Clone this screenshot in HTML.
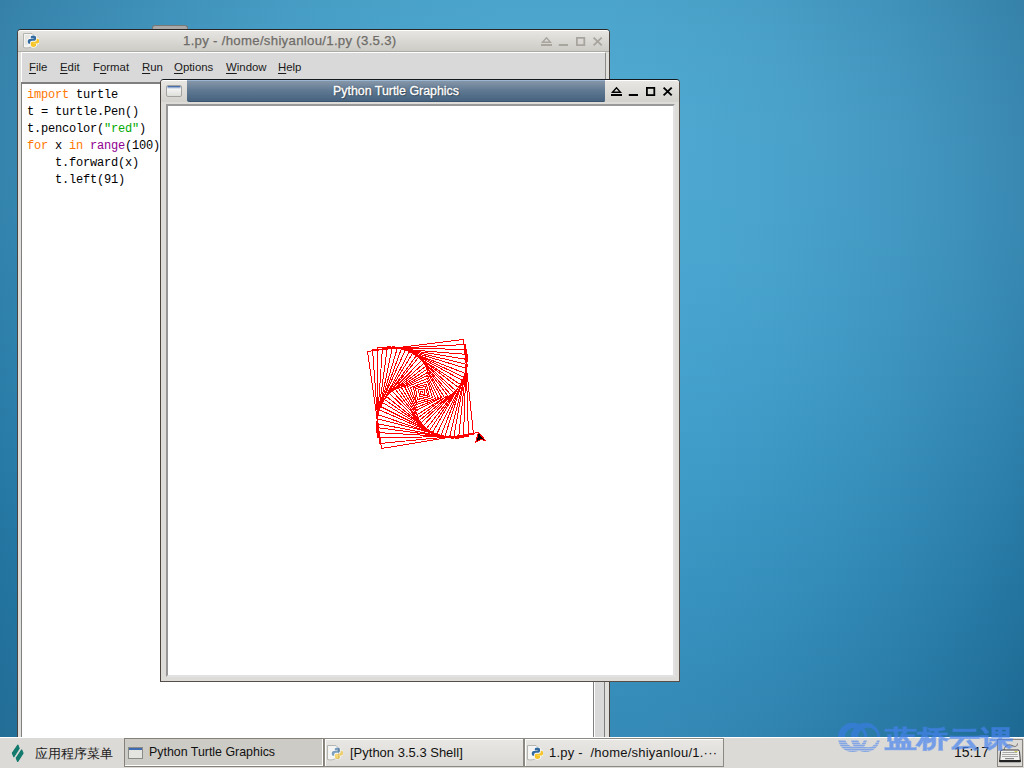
<!DOCTYPE html>
<html><head><meta charset="utf-8">
<style>
*{margin:0;padding:0;box-sizing:border-box}
html,body{width:1024px;height:768px;overflow:hidden;font-family:"Liberation Sans",sans-serif;background:#3583ad}
.a{position:absolute}
#bg div{position:absolute;left:0;width:1024px;height:8px}
/* IDLE window */
#idle{position:absolute;left:17px;top:29px;width:593px;height:710px;background:#e0deda;border:1px solid #4a433e;border-top-color:#2a2624;border-radius:4px 4px 0 0}
#idle .title{position:absolute;left:0;top:0;width:591px;height:22px;border-top:1px solid #fff;border-radius:3px 3px 0 0;background:linear-gradient(#e6e5e1,#cdcbc6);border-bottom:1px solid #adaba6}
#idle .ttext{position:absolute;left:165px;top:2px;text-align:left;white-space:nowrap;font-weight:normal;font-size:13.2px;color:#6e6c68;letter-spacing:0.3px;-webkit-text-stroke:0.25px #6e6c68}
#menubar{position:absolute;left:3px;top:22px;width:585px;height:31px;background:#d9d9d9;border-top:1px solid #fff;border-left:1px solid #fff;border-right:1px solid #8a8a8a}
#menubar span{position:absolute;top:7px;font-size:11.4px;color:#1a1a1a;line-height:14px}
#menubar span u{text-decoration:underline;text-underline-offset:1.5px;text-decoration-thickness:1px}
#text{position:absolute;left:3px;top:52px;width:573px;height:660px;background:#fff;border-top:2px solid #7f7f7f;border-left:1px solid #7f7f7f}
#code{position:absolute;left:5px;top:3px;font-family:"Liberation Mono",monospace;font-size:12px;letter-spacing:-0.2px;line-height:17px;color:#000;white-space:pre}
.kw{color:#ff7700}.st{color:#00aa00}.bi{color:#900090}
#sbar{position:absolute;left:575px;top:52px;width:12px;height:660px;background:#d9d9d9;border-left:1px solid #808080;border-right:1px solid #808080}
#sbar:before{content:"";position:absolute;left:0;top:0;width:1px;height:100%;background:#fff}
#tab{position:absolute;left:152px;top:25px;width:36px;height:5px;background:#a9a9a9;border:1px solid #777;border-bottom:none;border-radius:3px 3px 0 0}
/* turtle window */
#tw{position:absolute;left:160px;top:79px;width:520px;height:603px;background:#dedcd8;border:1px solid #15181c;border-bottom-color:#574e47;border-right-color:#574e47;border-left-color:#4a433e;border-radius:4px 4px 0 0}
#tw .tleft{position:absolute;left:0;top:0;width:26px;height:22px;border-top:1px solid #fff;border-radius:3px 0 0 0;background:linear-gradient(#e7e6e2,#d4d2cd)}
#tw .tright{position:absolute;left:444px;top:0;width:74px;height:22px;border-top:1px solid #fff;border-radius:0 3px 0 0;background:linear-gradient(#e7e6e2,#d4d2cd)}
#tw .tblue{position:absolute;left:26px;top:0;width:418px;height:22px;background:linear-gradient(#8696a8 0px,#5e7892 10px,#44607c 21px);border-top:1px solid #9ab6d2;border-bottom:1px solid #3a546e;border-radius:0 0 1.5px 2px}
#tw .ttext{position:absolute;left:0;width:418px;top:3px;text-align:center;font-weight:normal;font-size:12.4px;letter-spacing:0px;color:#fff;-webkit-text-stroke:0.35px #fff;text-shadow:0 0 1.5px #1c2a3a,1px 1px 1px rgba(0,0,0,.3)}
#canvas{position:absolute;left:5px;top:24px;width:509px;height:573px;background:#fff;border-top:2px solid #999;border-left:2px solid #969696;border-bottom:2px solid #e2e2e2;border-right:2px solid #e2e2e2}
/* taskbar */
#tb{position:absolute;left:0;top:737px;width:1024px;height:31px;background:#dcdad6;border-top:1px solid #fff}
.btn{position:absolute;top:0px;height:29px;border:1px solid #8c8882;background:linear-gradient(#e9e7e3,#dcdad6);box-shadow:inset 1px 1px 0 #fff}
.btn.on{background:#cdcbc6;border-color:#858179;box-shadow:inset -1px -1px 0 #fff}
.btn span{position:absolute;top:6px;font-size:13px;color:#111;white-space:nowrap}
</style></head><body>
<div id="bg"><div style="top:0px;background:linear-gradient(90deg,#3580a9 0px,#3988b0 64px,#3d8eb7 128px,#4194bc 192px,#4499c1 256px,#479ec5 320px,#49a1c8 384px,#4aa3ca 448px,#4ba4cc 512px,#4ba4cc 576px,#4ba3cb 640px,#49a1c8 704px,#479dc5 768px,#4498c0 832px,#4092ba 896px,#3b8ab2 960px,#3581aa 1024px)"></div><div style="top:8px;background:linear-gradient(90deg,#3581aa 0px,#3a88b1 64px,#3e8fb7 128px,#4195bd 192px,#449ac2 256px,#479ec6 320px,#49a1c9 384px,#4ba3cb 448px,#4ca5cc 512px,#4ca5cc 576px,#4ba4cb 640px,#4aa1c9 704px,#489ec5 768px,#4599c1 832px,#4092bb 896px,#3b8bb3 960px,#3581aa 1024px)"></div><div style="top:16px;background:linear-gradient(90deg,#3581aa 0px,#3a89b1 64px,#3e8fb8 128px,#4195bd 192px,#459ac2 256px,#479ec6 320px,#49a2c9 384px,#4ba4cb 448px,#4ca5cd 512px,#4ca5cd 576px,#4ca4cc 640px,#4aa2c9 704px,#489ec6 768px,#4599c1 832px,#4193bb 896px,#3c8bb4 960px,#3682ab 1024px)"></div><div style="top:24px;background:linear-gradient(90deg,#3682aa 0px,#3a89b2 64px,#3e90b8 128px,#4295be 192px,#459bc3 256px,#479fc7 320px,#4aa2ca 384px,#4ba4cc 448px,#4ca6cd 512px,#4ca6cd 576px,#4ca5cc 640px,#4ba2ca 704px,#489fc7 768px,#459ac2 832px,#4194bc 896px,#3c8cb4 960px,#3683ac 1024px)"></div><div style="top:32px;background:linear-gradient(90deg,#3682ab 0px,#3a89b2 64px,#3e90b8 128px,#4296be 192px,#459bc3 256px,#489fc7 320px,#4aa2ca 384px,#4ca5cc 448px,#4ca6ce 512px,#4da6ce 576px,#4ca5cd 640px,#4ba3cb 704px,#499fc7 768px,#469ac2 832px,#4294bc 896px,#3d8cb5 960px,#3683ac 1024px)"></div><div style="top:40px;background:linear-gradient(90deg,#3682ab 0px,#3a8ab2 64px,#3e90b9 128px,#4296be 192px,#459bc3 256px,#489fc7 320px,#4aa3cb 384px,#4ca5cd 448px,#4da6ce 512px,#4da7ce 576px,#4da5cd 640px,#4ba3cb 704px,#49a0c8 768px,#469bc3 832px,#4294bd 896px,#3d8db5 960px,#3784ad 1024px)"></div><div style="top:48px;background:linear-gradient(90deg,#3682ab 0px,#3a8ab3 64px,#3e91b9 128px,#4296bf 192px,#459cc4 256px,#48a0c8 320px,#4aa3cb 384px,#4ca5cd 448px,#4da7ce 512px,#4da7cf 576px,#4da6ce 640px,#4ba4cb 704px,#49a0c8 768px,#469bc3 832px,#4295bd 896px,#3d8db6 960px,#3784ad 1024px)"></div><div style="top:56px;background:linear-gradient(90deg,#3683ac 0px,#3a8ab3 64px,#3e91b9 128px,#4297bf 192px,#459cc4 256px,#48a0c8 320px,#4aa3cb 384px,#4ca6ce 448px,#4da7cf 512px,#4da7cf 576px,#4da6ce 640px,#4ca4cc 704px,#4aa0c8 768px,#479cc4 832px,#4395be 896px,#3e8eb6 960px,#3785ae 1024px)"></div><div style="top:64px;background:linear-gradient(90deg,#3683ac 0px,#3a8ab3 64px,#3e91ba 128px,#4297bf 192px,#459cc4 256px,#48a0c8 320px,#4ba4cc 384px,#4ca6ce 448px,#4da7cf 512px,#4ea8cf 576px,#4da7ce 640px,#4ca4cc 704px,#4aa1c9 768px,#479cc4 832px,#4396be 896px,#3e8eb7 960px,#3885ae 1024px)"></div><div style="top:72px;background:linear-gradient(90deg,#3683ac 0px,#3a8bb3 64px,#3e91ba 128px,#4297c0 192px,#469cc5 256px,#48a1c9 320px,#4ba4cc 384px,#4ca6ce 448px,#4da8d0 512px,#4ea8d0 576px,#4da7cf 640px,#4ca5cd 704px,#4aa1c9 768px,#479cc5 832px,#4396bf 896px,#3e8eb7 960px,#3885af 1024px)"></div><div style="top:80px;background:linear-gradient(90deg,#3683ac 0px,#3a8bb4 64px,#3e91ba 128px,#4297c0 192px,#469dc5 256px,#48a1c9 320px,#4ba4cc 384px,#4ca7cf 448px,#4da8d0 512px,#4ea8d0 576px,#4da7cf 640px,#4ca5cd 704px,#4aa1ca 768px,#479dc5 832px,#4396bf 896px,#3e8fb8 960px,#3886af 1024px)"></div><div style="top:88px;background:linear-gradient(90deg,#3683ad 0px,#3a8bb4 64px,#3e92ba 128px,#4298c0 192px,#469dc5 256px,#48a1c9 320px,#4ba4cd 384px,#4ca7cf 448px,#4ea8d0 512px,#4ea8d0 576px,#4ea7cf 640px,#4ca5cd 704px,#4aa2ca 768px,#479dc5 832px,#4397bf 896px,#3e8fb8 960px,#3886af 1024px)"></div><div style="top:96px;background:linear-gradient(90deg,#3684ad 0px,#3a8bb4 64px,#3e92bb 128px,#4298c0 192px,#469dc5 256px,#48a1ca 320px,#4ba5cd 384px,#4ca7cf 448px,#4ea8d0 512px,#4ea8d1 576px,#4ea8d0 640px,#4ca5ce 704px,#4aa2ca 768px,#479dc6 832px,#4397c0 896px,#3f8fb8 960px,#3986b0 1024px)"></div><div style="top:104px;background:linear-gradient(90deg,#3684ad 0px,#3a8bb4 64px,#3e92bb 128px,#4298c1 192px,#469dc6 256px,#48a1ca 320px,#4ba5cd 384px,#4ca7cf 448px,#4ea8d1 512px,#4ea9d1 576px,#4ea8d0 640px,#4ca6ce 704px,#4aa2cb 768px,#489dc6 832px,#4497c0 896px,#3f90b9 960px,#3987b0 1024px)"></div><div style="top:112px;background:linear-gradient(90deg,#3684ad 0px,#3a8bb4 64px,#3e92bb 128px,#4298c1 192px,#459dc6 256px,#48a1ca 320px,#4ba5cd 384px,#4ca7d0 448px,#4ea9d1 512px,#4ea9d1 576px,#4ea8d0 640px,#4da6ce 704px,#4ba2cb 768px,#489ec6 832px,#4498c0 896px,#3f90b9 960px,#3987b0 1024px)"></div><div style="top:120px;background:linear-gradient(90deg,#3584ad 0px,#3a8bb4 64px,#3e92bb 128px,#4298c1 192px,#459dc6 256px,#48a1ca 320px,#4ba5cd 384px,#4ca7d0 448px,#4ea9d1 512px,#4ea9d1 576px,#4ea8d0 640px,#4da6ce 704px,#4ba3cb 768px,#489ec6 832px,#4498c1 896px,#3f90b9 960px,#3987b0 1024px)"></div><div style="top:128px;background:linear-gradient(90deg,#3584ad 0px,#3a8bb5 64px,#3e92bb 128px,#4298c1 192px,#459dc6 256px,#48a2ca 320px,#4ba5ce 384px,#4ca7d0 448px,#4ea9d1 512px,#4ea9d2 576px,#4ea8d1 640px,#4da6cf 704px,#4ba3cb 768px,#489ec7 832px,#4498c1 896px,#3f90b9 960px,#3987b1 1024px)"></div><div style="top:136px;background:linear-gradient(90deg,#3584ad 0px,#3a8bb5 64px,#3e92bb 128px,#4298c1 192px,#459dc6 256px,#48a2ca 320px,#4ba5ce 384px,#4ca7d0 448px,#4da9d1 512px,#4ea9d2 576px,#4ea8d1 640px,#4ca6cf 704px,#4ba3cb 768px,#489ec7 832px,#4498c1 896px,#3f90ba 960px,#3988b1 1024px)"></div><div style="top:144px;background:linear-gradient(90deg,#3584ad 0px,#3a8bb5 64px,#3e92bb 128px,#4298c1 192px,#459dc6 256px,#48a2cb 320px,#4aa5ce 384px,#4ca7d0 448px,#4da9d2 512px,#4ea9d2 576px,#4ea8d1 640px,#4ca6cf 704px,#4aa3cc 768px,#489ec7 832px,#4498c1 896px,#3f91ba 960px,#3988b1 1024px)"></div><div style="top:152px;background:linear-gradient(90deg,#3584ad 0px,#398bb5 64px,#3e92bb 128px,#4198c1 192px,#459dc6 256px,#48a2cb 320px,#4aa5ce 384px,#4ca7d0 448px,#4da9d2 512px,#4ea9d2 576px,#4da8d1 640px,#4ca6cf 704px,#4aa3cc 768px,#489ec7 832px,#4498c1 896px,#3f91ba 960px,#3988b1 1024px)"></div><div style="top:160px;background:linear-gradient(90deg,#3584ae 0px,#398bb5 64px,#3d92bb 128px,#4198c1 192px,#459dc6 256px,#48a2cb 320px,#4aa5ce 384px,#4ca7d0 448px,#4da9d2 512px,#4ea9d2 576px,#4da8d1 640px,#4ca6cf 704px,#4aa3cc 768px,#479ec7 832px,#4498c1 896px,#3f91ba 960px,#3988b1 1024px)"></div><div style="top:168px;background:linear-gradient(90deg,#3484ae 0px,#398bb5 64px,#3d92bc 128px,#4198c1 192px,#459dc7 256px,#48a2cb 320px,#4aa5ce 384px,#4ca7d1 448px,#4da9d2 512px,#4da9d2 576px,#4da8d1 640px,#4ca6cf 704px,#4aa3cc 768px,#479ec7 832px,#4398c2 896px,#3f91ba 960px,#3988b2 1024px)"></div><div style="top:176px;background:linear-gradient(90deg,#3484ad 0px,#398bb5 64px,#3d92bc 128px,#4198c1 192px,#449dc7 256px,#47a1cb 320px,#4aa5ce 384px,#4ca7d1 448px,#4da9d2 512px,#4da9d2 576px,#4da8d1 640px,#4ca6cf 704px,#4aa3cc 768px,#479ec8 832px,#4398c2 896px,#3e91ba 960px,#3988b2 1024px)"></div><div style="top:184px;background:linear-gradient(90deg,#3484ad 0px,#388bb5 64px,#3d92bc 128px,#4198c1 192px,#449dc7 256px,#47a1cb 320px,#4aa5ce 384px,#4ba7d1 448px,#4da9d2 512px,#4da9d2 576px,#4da8d1 640px,#4ca6cf 704px,#4aa3cc 768px,#479ec8 832px,#4398c2 896px,#3e91ba 960px,#3988b2 1024px)"></div><div style="top:192px;background:linear-gradient(90deg,#3484ad 0px,#388bb5 64px,#3c92bb 128px,#4098c1 192px,#449dc7 256px,#47a1cb 320px,#49a5ce 384px,#4ba7d1 448px,#4ca9d2 512px,#4da9d2 576px,#4da8d1 640px,#4ca6cf 704px,#4aa3cc 768px,#479ec8 832px,#4398c2 896px,#3e91ba 960px,#3888b2 1024px)"></div><div style="top:200px;background:linear-gradient(90deg,#3384ad 0px,#388bb5 64px,#3c92bb 128px,#4098c1 192px,#449dc7 256px,#47a1cb 320px,#49a5ce 384px,#4ba7d1 448px,#4ca9d2 512px,#4da9d2 576px,#4ca8d1 640px,#4ba6cf 704px,#4aa3cc 768px,#479ec8 832px,#4398c2 896px,#3e91ba 960px,#3888b2 1024px)"></div><div style="top:208px;background:linear-gradient(90deg,#3383ad 0px,#388bb5 64px,#3c92bb 128px,#4098c1 192px,#439dc6 256px,#46a1cb 320px,#49a5ce 384px,#4ba7d1 448px,#4ca8d2 512px,#4ca9d2 576px,#4ca8d1 640px,#4ba6cf 704px,#49a3cc 768px,#469ec8 832px,#4398c2 896px,#3e91ba 960px,#3888b2 1024px)"></div><div style="top:216px;background:linear-gradient(90deg,#3383ad 0px,#378bb5 64px,#3c91bb 128px,#4097c1 192px,#439dc6 256px,#46a1cb 320px,#49a4ce 384px,#4aa7d1 448px,#4ca8d2 512px,#4ca9d2 576px,#4ca8d1 640px,#4ba6cf 704px,#49a3cc 768px,#469ec8 832px,#4298c2 896px,#3e91ba 960px,#3888b2 1024px)"></div><div style="top:224px;background:linear-gradient(90deg,#3283ad 0px,#378bb5 64px,#3b91bb 128px,#3f97c1 192px,#439cc6 256px,#46a1cb 320px,#48a4ce 384px,#4aa7d0 448px,#4ba8d2 512px,#4ca8d2 576px,#4ca8d1 640px,#4ba6cf 704px,#49a2cc 768px,#469ec8 832px,#4298c2 896px,#3d91ba 960px,#3888b2 1024px)"></div><div style="top:232px;background:linear-gradient(90deg,#3283ad 0px,#378ab4 64px,#3b91bb 128px,#3f97c1 192px,#429cc6 256px,#46a1cb 320px,#48a4ce 384px,#4aa6d0 448px,#4ba8d2 512px,#4ca8d2 576px,#4ba8d1 640px,#4aa6cf 704px,#49a2cc 768px,#469ec8 832px,#4298c2 896px,#3d91ba 960px,#3788b2 1024px)"></div><div style="top:240px;background:linear-gradient(90deg,#3283ad 0px,#368ab4 64px,#3b91bb 128px,#3f97c1 192px,#429cc6 256px,#45a0ca 320px,#48a4ce 384px,#4aa6d0 448px,#4ba8d2 512px,#4ba8d2 576px,#4ba7d1 640px,#4aa5cf 704px,#48a2cc 768px,#459ec7 832px,#4298c2 896px,#3d90ba 960px,#3788b2 1024px)"></div><div style="top:248px;background:linear-gradient(90deg,#3183ad 0px,#368ab4 64px,#3a91bb 128px,#3e97c1 192px,#429cc6 256px,#45a0ca 320px,#47a4ce 384px,#49a6d0 448px,#4ba8d2 512px,#4ba8d2 576px,#4ba7d1 640px,#4aa5cf 704px,#48a2cc 768px,#459dc7 832px,#4198c1 896px,#3d90ba 960px,#3788b1 1024px)"></div><div style="top:256px;background:linear-gradient(90deg,#3182ad 0px,#368ab4 64px,#3a90bb 128px,#3e96c1 192px,#419cc6 256px,#45a0ca 320px,#47a3ce 384px,#49a6d0 448px,#4aa7d1 512px,#4ba8d2 576px,#4ba7d1 640px,#4aa5cf 704px,#48a2cc 768px,#459dc7 832px,#4197c1 896px,#3c90ba 960px,#3787b1 1024px)"></div><div style="top:264px;background:linear-gradient(90deg,#3182ac 0px,#358ab4 64px,#3a90bb 128px,#3e96c1 192px,#419bc6 256px,#44a0ca 320px,#47a3cd 384px,#49a6d0 448px,#4aa7d1 512px,#4aa7d2 576px,#4aa7d1 640px,#49a5cf 704px,#47a2cc 768px,#459dc7 832px,#4197c1 896px,#3c90ba 960px,#3687b1 1024px)"></div><div style="top:272px;background:linear-gradient(90deg,#3082ac 0px,#3589b4 64px,#3990ba 128px,#3d96c0 192px,#419bc6 256px,#449fca 320px,#46a3cd 384px,#48a5d0 448px,#4aa7d1 512px,#4aa7d1 576px,#4aa6d1 640px,#49a4cf 704px,#47a1cb 768px,#449dc7 832px,#4097c1 896px,#3c90ba 960px,#3687b1 1024px)"></div><div style="top:280px;background:linear-gradient(90deg,#3082ac 0px,#3589b3 64px,#3990ba 128px,#3d96c0 192px,#409bc5 256px,#439fca 320px,#46a3cd 384px,#48a5d0 448px,#49a7d1 512px,#4aa7d1 576px,#4aa6d1 640px,#49a4cf 704px,#47a1cb 768px,#449dc7 832px,#4097c1 896px,#3b8fb9 960px,#3687b1 1024px)"></div><div style="top:288px;background:linear-gradient(90deg,#3081ac 0px,#3489b3 64px,#398fba 128px,#3d95c0 192px,#409bc5 256px,#439fc9 320px,#46a2cd 384px,#48a5cf 448px,#49a6d1 512px,#49a7d1 576px,#49a6d0 640px,#48a4ce 704px,#46a1cb 768px,#439cc7 832px,#4096c1 896px,#3b8fb9 960px,#3587b1 1024px)"></div><div style="top:296px;background:linear-gradient(90deg,#2f81ac 0px,#3488b3 64px,#388fba 128px,#3c95c0 192px,#409ac5 256px,#439fc9 320px,#45a2cd 384px,#47a4cf 448px,#48a6d1 512px,#49a6d1 576px,#49a6d0 640px,#48a4ce 704px,#46a0cb 768px,#439cc6 832px,#3f96c0 896px,#3b8fb9 960px,#3586b0 1024px)"></div><div style="top:304px;background:linear-gradient(90deg,#2f81ab 0px,#3388b3 64px,#388fba 128px,#3c95c0 192px,#3f9ac5 256px,#429ec9 320px,#45a2cc 384px,#47a4cf 448px,#48a6d0 512px,#49a6d1 576px,#48a5d0 640px,#47a3ce 704px,#46a0cb 768px,#439cc6 832px,#3f96c0 896px,#3a8fb9 960px,#3486b0 1024px)"></div><div style="top:312px;background:linear-gradient(90deg,#2e81ab 0px,#3388b3 64px,#378eb9 128px,#3b94bf 192px,#3f9ac4 256px,#429ec9 320px,#44a1cc 384px,#46a4cf 448px,#48a5d0 512px,#48a6d0 576px,#48a5d0 640px,#47a3ce 704px,#45a0ca 768px,#429bc6 832px,#3f96c0 896px,#3a8eb9 960px,#3486b0 1024px)"></div><div style="top:320px;background:linear-gradient(90deg,#2e80ab 0px,#3388b2 64px,#378eb9 128px,#3b94bf 192px,#3e99c4 256px,#429ec9 320px,#44a1cc 384px,#46a3ce 448px,#47a5d0 512px,#48a5d0 576px,#48a5cf 640px,#47a3cd 704px,#459fca 768px,#429bc6 832px,#3e95c0 896px,#398eb8 960px,#3485b0 1024px)"></div><div style="top:328px;background:linear-gradient(90deg,#2e80ab 0px,#3287b2 64px,#378eb9 128px,#3b94bf 192px,#3e99c4 256px,#419dc8 320px,#44a1cc 384px,#46a3ce 448px,#47a5d0 512px,#47a5d0 576px,#47a4cf 640px,#46a2cd 704px,#449fca 768px,#429bc5 832px,#3e95bf 896px,#398eb8 960px,#3385af 1024px)"></div><div style="top:336px;background:linear-gradient(90deg,#2d80aa 0px,#3287b2 64px,#368db8 128px,#3a93bf 192px,#3e99c4 256px,#419dc8 320px,#43a0cb 384px,#45a3ce 448px,#46a4cf 512px,#47a5d0 576px,#47a4cf 640px,#46a2cd 704px,#449fca 768px,#419ac5 832px,#3d94bf 896px,#398db8 960px,#3385af 1024px)"></div><div style="top:344px;background:linear-gradient(90deg,#2d7faa 0px,#3187b1 64px,#368db8 128px,#3a93be 192px,#3d98c3 256px,#409cc8 320px,#43a0cb 384px,#45a2ce 448px,#46a4cf 512px,#47a4cf 576px,#46a3cf 640px,#45a2cd 704px,#439ec9 768px,#419ac5 832px,#3d94bf 896px,#388db7 960px,#3284af 1024px)"></div><div style="top:352px;background:linear-gradient(90deg,#2c7faa 0px,#3186b1 64px,#358db8 128px,#3993be 192px,#3d98c3 256px,#409cc7 320px,#429fcb 384px,#44a2cd 448px,#46a3cf 512px,#46a4cf 576px,#46a3ce 640px,#45a1cc 704px,#439ec9 768px,#409ac4 832px,#3c94be 896px,#388cb7 960px,#3284ae 1024px)"></div><div style="top:360px;background:linear-gradient(90deg,#2c7fa9 0px,#3186b1 64px,#358cb8 128px,#3992be 192px,#3c97c3 256px,#3f9cc7 320px,#429fcb 384px,#44a2cd 448px,#45a3ce 512px,#46a3cf 576px,#45a3ce 640px,#44a1cc 704px,#439ec9 768px,#4099c4 832px,#3c93be 896px,#378cb7 960px,#3184ae 1024px)"></div><div style="top:368px;background:linear-gradient(90deg,#2c7ea9 0px,#3085b1 64px,#348cb7 128px,#3892bd 192px,#3c97c2 256px,#3f9bc7 320px,#419fca 384px,#43a1cd 448px,#45a3ce 512px,#45a3ce 576px,#45a2ce 640px,#44a0cc 704px,#429dc8 768px,#3f99c4 832px,#3c93be 896px,#378cb6 960px,#3183ae 1024px)"></div><div style="top:376px;background:linear-gradient(90deg,#2b7ea9 0px,#3085b0 64px,#348cb7 128px,#3891bd 192px,#3c97c2 256px,#3f9bc7 320px,#419eca 384px,#43a1cc 448px,#44a2ce 512px,#45a2ce 576px,#45a2cd 640px,#44a0cb 704px,#429dc8 768px,#3f98c3 832px,#3b92bd 896px,#368bb6 960px,#3083ad 1024px)"></div><div style="top:384px;background:linear-gradient(90deg,#2b7ea8 0px,#2f85b0 64px,#348bb7 128px,#3891bd 192px,#3b96c2 256px,#3e9ac6 320px,#419eca 384px,#42a0cc 448px,#44a2cd 512px,#44a2ce 576px,#44a1cd 640px,#439fcb 704px,#419cc8 768px,#3e98c3 832px,#3b92bd 896px,#368bb6 960px,#3082ad 1024px)"></div><div style="top:392px;background:linear-gradient(90deg,#2a7da8 0px,#2f84b0 64px,#338bb6 128px,#3791bc 192px,#3b96c1 256px,#3e9ac6 320px,#409dc9 384px,#42a0cc 448px,#43a1cd 512px,#44a2cd 576px,#44a1cd 640px,#439fca 704px,#419cc7 768px,#3e97c3 832px,#3a92bd 896px,#358ab5 960px,#2f82ac 1024px)"></div><div style="top:400px;background:linear-gradient(90deg,#2a7da8 0px,#2f84af 64px,#338ab6 128px,#3790bc 192px,#3a95c1 256px,#3d9ac5 320px,#409dc9 384px,#429fcb 448px,#43a1cd 512px,#43a1cd 576px,#43a0cc 640px,#429eca 704px,#409bc7 768px,#3d97c2 832px,#3a91bc 896px,#358ab5 960px,#2f81ac 1024px)"></div><div style="top:408px;background:linear-gradient(90deg,#2a7ca7 0px,#2e84af 64px,#328ab6 128px,#3690bc 192px,#3a95c1 256px,#3d99c5 320px,#3f9cc8 384px,#419fcb 448px,#42a0cc 512px,#43a1cd 576px,#43a0cc 640px,#429eca 704px,#409bc6 768px,#3d96c2 832px,#3991bc 896px,#3489b4 960px,#2e81ac 1024px)"></div><div style="top:416px;background:linear-gradient(90deg,#297ca7 0px,#2e83ae 64px,#328ab5 128px,#368fbb 192px,#3994c0 256px,#3c99c5 320px,#3f9cc8 384px,#419ecb 448px,#42a0cc 512px,#42a0cc 576px,#429fcb 640px,#419dc9 704px,#3f9ac6 768px,#3c96c1 832px,#3990bb 896px,#3489b4 960px,#2e80ab 1024px)"></div><div style="top:424px;background:linear-gradient(90deg,#297ca7 0px,#2d83ae 64px,#3289b5 128px,#358fbb 192px,#3994c0 256px,#3c98c4 320px,#3e9cc8 384px,#409eca 448px,#419fcb 512px,#42a0cc 576px,#429fcb 640px,#419dc9 704px,#3f9ac6 768px,#3c95c1 832px,#3890bb 896px,#3388b3 960px,#2d80ab 1024px)"></div><div style="top:432px;background:linear-gradient(90deg,#287ba6 0px,#2d82ae 64px,#3189b4 128px,#358eba 192px,#3994c0 256px,#3c98c4 320px,#3e9bc7 384px,#409dca 448px,#419fcb 512px,#429fcb 576px,#419eca 640px,#409cc8 704px,#3e99c5 768px,#3b95c0 832px,#388fba 896px,#3388b3 960px,#2d7faa 1024px)"></div><div style="top:440px;background:linear-gradient(90deg,#287ba6 0px,#2d82ad 64px,#3188b4 128px,#358eba 192px,#3893bf 256px,#3b97c4 320px,#3e9bc7 384px,#3f9dc9 448px,#419ecb 512px,#419fcb 576px,#419eca 640px,#409cc8 704px,#3e99c5 768px,#3b94c0 832px,#378fba 896px,#3287b3 960px,#2c7faa 1024px)"></div><div style="top:448px;background:linear-gradient(90deg,#287aa6 0px,#2c81ad 64px,#3088b4 128px,#348eba 192px,#3893bf 256px,#3b97c3 320px,#3d9ac6 384px,#3f9cc9 448px,#409eca 512px,#419eca 576px,#409dca 640px,#3f9bc8 704px,#3d98c4 768px,#3a94c0 832px,#378eb9 896px,#3287b2 960px,#2c7ea9 1024px)"></div><div style="top:456px;background:linear-gradient(90deg,#277aa5 0px,#2c81ad 64px,#3087b3 128px,#348db9 192px,#3792be 256px,#3a96c3 320px,#3d9ac6 384px,#3e9cc8 448px,#409dca 512px,#409eca 576px,#409dc9 640px,#3f9bc7 704px,#3d98c4 768px,#3a93bf 832px,#368eb9 896px,#3186b2 960px,#2b7ea9 1024px)"></div><div style="top:464px;background:linear-gradient(90deg,#277aa5 0px,#2b81ac 64px,#3087b3 128px,#338db9 192px,#3792be 256px,#3a96c2 320px,#3c99c6 384px,#3e9bc8 448px,#3f9dc9 512px,#409dca 576px,#3f9cc9 640px,#3e9ac7 704px,#3c97c3 768px,#3993bf 832px,#368db8 896px,#3186b1 960px,#2b7da8 1024px)"></div><div style="top:472px;background:linear-gradient(90deg,#2679a4 0px,#2b80ac 64px,#2f87b2 128px,#338cb8 192px,#3691be 256px,#3995c2 320px,#3c99c5 384px,#3e9bc8 448px,#3f9cc9 512px,#3f9dc9 576px,#3f9cc8 640px,#3e9ac6 704px,#3c97c3 768px,#3992be 832px,#358cb8 896px,#3085b0 960px,#2a7da8 1024px)"></div><div style="top:480px;background:linear-gradient(90deg,#2679a4 0px,#2b80ab 64px,#2f86b2 128px,#338cb8 192px,#3691bd 256px,#3995c1 320px,#3b98c5 384px,#3d9ac7 448px,#3e9cc8 512px,#3f9cc9 576px,#3e9bc8 640px,#3d99c6 704px,#3b96c2 768px,#3892be 832px,#358cb7 896px,#3085b0 960px,#2a7ca7 1024px)"></div><div style="top:488px;background:linear-gradient(90deg,#2678a4 0px,#2a7fab 64px,#2e86b2 128px,#328bb8 192px,#3690bd 256px,#3994c1 320px,#3b98c4 384px,#3d9ac7 448px,#3e9bc8 512px,#3e9cc8 576px,#3e9bc7 640px,#3d99c5 704px,#3b96c2 768px,#3891bd 832px,#348bb7 896px,#2f84af 960px,#297ca7 1024px)"></div><div style="top:496px;background:linear-gradient(90deg,#2578a3 0px,#2a7fab 64px,#2e85b1 128px,#328bb7 192px,#3590bc 256px,#3894c1 320px,#3b97c4 384px,#3c99c6 448px,#3d9bc8 512px,#3e9bc8 576px,#3e9ac7 640px,#3c98c5 704px,#3a95c1 768px,#3891bc 832px,#348bb6 896px,#2f84af 960px,#297ba6 1024px)"></div><div style="top:504px;background:linear-gradient(90deg,#2577a3 0px,#2a7eaa 64px,#2e85b1 128px,#328ab7 192px,#358fbc 256px,#3893c0 320px,#3a97c3 384px,#3c99c6 448px,#3d9ac7 512px,#3d9ac7 576px,#3d9ac6 640px,#3c98c4 704px,#3a94c1 768px,#3790bc 832px,#338ab6 896px,#2e83ae 960px,#287aa5 1024px)"></div><div style="top:512px;background:linear-gradient(90deg,#2577a2 0px,#297eaa 64px,#2d84b0 128px,#318ab6 192px,#358fbb 256px,#3793c0 320px,#3a96c3 384px,#3c98c5 448px,#3d9ac7 512px,#3d9ac7 576px,#3d99c6 640px,#3c97c4 704px,#3994c0 768px,#378fbb 832px,#338ab5 896px,#2e82ae 960px,#287aa5 1024px)"></div><div style="top:520px;background:linear-gradient(90deg,#2477a2 0px,#297ea9 64px,#2d84b0 128px,#3189b6 192px,#348ebb 256px,#3792bf 320px,#3995c2 384px,#3b98c5 448px,#3c99c6 512px,#3d99c6 576px,#3c98c5 640px,#3b96c3 704px,#3993c0 768px,#368fbb 832px,#3289b5 896px,#2d82ad 960px,#2779a4 1024px)"></div><div style="top:528px;background:linear-gradient(90deg,#2476a1 0px,#297da9 64px,#2d83b0 128px,#3189b5 192px,#348ebb 256px,#3792bf 320px,#3995c2 384px,#3b97c4 448px,#3c99c6 512px,#3c99c6 576px,#3c98c5 640px,#3b96c3 704px,#3993bf 768px,#368eba 832px,#3288b4 896px,#2d81ad 960px,#2779a4 1024px)"></div><div style="top:536px;background:linear-gradient(90deg,#2476a1 0px,#287da8 64px,#2c83af 128px,#3088b5 192px,#348dba 256px,#3691be 320px,#3994c2 384px,#3a97c4 448px,#3b98c5 512px,#3c98c5 576px,#3b97c4 640px,#3a95c2 704px,#3892bf 768px,#358eba 832px,#3188b4 896px,#2c81ac 960px,#2678a3 1024px)"></div><div style="top:544px;background:linear-gradient(90deg,#2475a1 0px,#287ca8 64px,#2c82af 128px,#3088b5 192px,#338dba 256px,#3691be 320px,#3894c1 384px,#3a96c3 448px,#3b97c5 512px,#3b98c5 576px,#3b97c4 640px,#3a95c1 704px,#3892be 768px,#358db9 832px,#3187b3 896px,#2c80ab 960px,#2677a2 1024px)"></div><div style="top:552px;background:linear-gradient(90deg,#2375a0 0px,#287ca8 64px,#2c82ae 128px,#3088b4 192px,#338cb9 256px,#3690bd 320px,#3893c1 384px,#3a96c3 448px,#3b97c4 512px,#3b97c4 576px,#3b96c3 640px,#3994c1 704px,#3791bd 768px,#348cb9 832px,#3087b2 896px,#2b7fab 960px,#2577a2 1024px)"></div><div style="top:560px;background:linear-gradient(90deg,#2375a0 0px,#287ba7 64px,#2c82ae 128px,#2f87b4 192px,#338cb9 256px,#3590bd 320px,#3893c0 384px,#3995c2 448px,#3a96c4 512px,#3b97c4 576px,#3a96c3 640px,#3994c0 704px,#3790bd 768px,#348cb8 832px,#3086b2 896px,#2b7faa 960px,#2576a1 1024px)"></div><div style="top:568px;background:linear-gradient(90deg,#23749f 0px,#277ba7 64px,#2b81ad 128px,#2f87b3 192px,#328bb8 256px,#358fbc 320px,#3792c0 384px,#3995c2 448px,#3a96c3 512px,#3a96c3 576px,#3a95c2 640px,#3993c0 704px,#3690bc 768px,#338bb7 832px,#2f85b1 896px,#2a7eaa 960px,#2476a1 1024px)"></div><div style="top:576px;background:linear-gradient(90deg,#23749f 0px,#277ba6 64px,#2b81ad 128px,#2f86b3 192px,#328bb8 256px,#358fbc 320px,#3792bf 384px,#3994c1 448px,#3a95c3 512px,#3a95c3 576px,#3994c2 640px,#3892bf 704px,#368fbc 768px,#338bb7 832px,#2f85b1 896px,#2a7ea9 960px,#2475a0 1024px)"></div><div style="top:584px;background:linear-gradient(90deg,#23739f 0px,#277aa6 64px,#2b80ac 128px,#2f86b2 192px,#328ab7 256px,#358ebb 320px,#3791bf 384px,#3893c1 448px,#3995c2 512px,#3a95c2 576px,#3994c1 640px,#3892bf 704px,#368fbb 768px,#338ab6 832px,#2e84b0 896px,#297da8 960px,#23749f 1024px)"></div><div style="top:592px;background:linear-gradient(90deg,#22739e 0px,#277aa5 64px,#2b80ac 128px,#2e85b2 192px,#328ab7 256px,#348ebb 320px,#3691be 384px,#3893c0 448px,#3994c1 512px,#3994c2 576px,#3993c0 640px,#3791be 704px,#358ebb 768px,#3289b6 832px,#2e84af 896px,#297ca8 960px,#23749f 1024px)"></div><div style="top:600px;background:linear-gradient(90deg,#22739e 0px,#2779a5 64px,#2b7fac 128px,#2e85b1 192px,#3189b6 256px,#348dba 320px,#3690be 384px,#3892c0 448px,#3994c1 512px,#3994c1 576px,#3893c0 640px,#3791be 704px,#358dba 768px,#3289b5 832px,#2e83af 896px,#287ca7 960px,#22739e 1024px)"></div><div style="top:608px;background:linear-gradient(90deg,#22729d 0px,#2679a5 64px,#2a7fab 128px,#2e84b1 192px,#3189b6 256px,#348dba 320px,#3690bd 384px,#3892bf 448px,#3893c0 512px,#3993c0 576px,#3892bf 640px,#3790bd 704px,#348db9 768px,#3188b4 832px,#2d82ae 896px,#287ba6 960px,#22739d 1024px)"></div><div style="top:616px;background:linear-gradient(90deg,#22729d 0px,#2678a4 64px,#2a7eab 128px,#2e84b0 192px,#3188b5 256px,#348cb9 320px,#368fbd 384px,#3791bf 448px,#3892c0 512px,#3893c0 576px,#3892bf 640px,#368fbc 704px,#348cb9 768px,#3188b4 832px,#2d82ad 896px,#287aa6 960px,#22729d 1024px)"></div><div style="top:624px;background:linear-gradient(90deg,#22719c 0px,#2678a4 64px,#2a7eaa 128px,#2e83b0 192px,#3188b5 256px,#338cb9 320px,#358fbc 384px,#3791be 448px,#3892bf 512px,#3892bf 576px,#3791be 640px,#368fbc 704px,#348cb8 768px,#3187b3 832px,#2c81ad 896px,#277aa5 960px,#21719c 1024px)"></div><div style="top:632px;background:linear-gradient(90deg,#22719c 0px,#2678a3 64px,#2a7eaa 128px,#2d83b0 192px,#3188b4 256px,#338bb9 320px,#358ebc 384px,#3790be 448px,#3891bf 512px,#3891bf 576px,#3790be 640px,#368ebb 704px,#338bb8 768px,#3086b3 832px,#2c80ac 896px,#2779a4 960px,#21719b 1024px)"></div><div style="top:640px;background:linear-gradient(90deg,#22719c 0px,#2677a3 64px,#2a7da9 128px,#2d83af 192px,#3087b4 256px,#338bb8 320px,#358ebb 384px,#3790bd 448px,#3791be 512px,#3891be 576px,#3790bd 640px,#358ebb 704px,#338ab7 768px,#3086b2 832px,#2c80ac 896px,#2779a4 960px,#20709b 1024px)"></div><div style="top:648px;background:linear-gradient(90deg,#22709b 0px,#2677a2 64px,#2a7da9 128px,#2d82af 192px,#3087b4 256px,#338ab8 320px,#358dbb 384px,#368fbd 448px,#3790be 512px,#3790be 576px,#378fbc 640px,#358dba 704px,#338ab6 768px,#3085b1 832px,#2b7fab 896px,#2678a3 960px,#206f9a 1024px)"></div><div style="top:656px;background:linear-gradient(90deg,#22709b 0px,#2677a2 64px,#2a7ca9 128px,#2d82ae 192px,#3086b3 256px,#338ab7 320px,#358dba 384px,#368fbc 448px,#3790bd 512px,#3790bd 576px,#368fbc 640px,#358db9 704px,#3389b6 768px,#2f85b1 832px,#2b7faa 896px,#2677a2 960px,#206f99 1024px)"></div><div style="top:664px;background:linear-gradient(90deg,#22709a 0px,#2676a2 64px,#2a7ca8 128px,#2d81ae 192px,#3086b3 256px,#3389b7 320px,#358cba 384px,#368ebc 448px,#378fbd 512px,#378fbd 576px,#368ebb 640px,#358cb9 704px,#3289b5 768px,#2f84b0 832px,#2b7eaa 896px,#2577a2 960px,#1f6e98 1024px)"></div><div style="top:672px;background:linear-gradient(90deg,#226f9a 0px,#2676a1 64px,#2a7ca8 128px,#2d81ad 192px,#3085b2 256px,#3389b6 320px,#358cb9 384px,#368ebb 448px,#378fbc 512px,#378fbc 576px,#368ebb 640px,#348bb8 704px,#3288b5 768px,#2f83af 832px,#2a7da9 896px,#2576a1 960px,#1f6d98 1024px)"></div><div style="top:680px;background:linear-gradient(90deg,#226f9a 0px,#2676a1 64px,#2a7ba7 128px,#2d80ad 192px,#3085b2 256px,#3389b6 320px,#348bb9 384px,#368dbb 448px,#378ebc 512px,#378ebc 576px,#368dba 640px,#348bb8 704px,#3287b4 768px,#2f83af 832px,#2a7da8 896px,#2575a0 960px,#1f6d97 1024px)"></div><div style="top:688px;background:linear-gradient(90deg,#226f99 0px,#2675a0 64px,#2a7ba7 128px,#2d80ac 192px,#3085b1 256px,#3288b5 320px,#348bb8 384px,#368dba 448px,#368ebb 512px,#368ebb 576px,#368dba 640px,#348ab7 704px,#3287b3 768px,#2e82ae 832px,#2a7ca8 896px,#2575a0 960px,#1e6c96 1024px)"></div><div style="top:696px;background:linear-gradient(90deg,#226f99 0px,#2675a0 64px,#2a7ba6 128px,#2d80ac 192px,#3084b1 256px,#3288b5 320px,#348bb8 384px,#368cba 448px,#368dbb 512px,#368dba 576px,#368cb9 640px,#348ab7 704px,#3186b3 768px,#2e82ae 832px,#2a7ca7 896px,#24749f 960px,#1e6c96 1024px)"></div><div style="top:704px;background:linear-gradient(90deg,#226e99 0px,#2675a0 64px,#2a7aa6 128px,#2d7fac 192px,#3084b0 256px,#3287b4 320px,#348ab7 384px,#368cb9 448px,#368dba 512px,#368dba 576px,#358cb9 640px,#3489b6 704px,#3186b2 768px,#2e81ad 832px,#297ba6 896px,#24749e 960px,#1e6b95 1024px)"></div><div style="top:712px;background:linear-gradient(90deg,#226e98 0px,#26749f 64px,#2a7aa6 128px,#2d7fab 192px,#3083b0 256px,#3287b4 320px,#348ab7 384px,#368bb9 448px,#368cba 512px,#368cb9 576px,#358bb8 640px,#3489b5 704px,#3185b1 768px,#2e81ac 832px,#297aa6 896px,#24739e 960px,#1d6a94 1024px)"></div><div style="top:720px;background:linear-gradient(90deg,#226e98 0px,#26749f 64px,#2a7aa5 128px,#2d7fab 192px,#3083b0 256px,#3387b3 320px,#3489b6 384px,#368bb8 448px,#368cb9 512px,#368cb9 576px,#358bb7 640px,#3488b5 704px,#3185b1 768px,#2e80ac 832px,#297aa5 896px,#24739d 960px,#1d6a94 1024px)"></div><div style="top:728px;background:linear-gradient(90deg,#236e97 0px,#27749f 64px,#2a79a5 128px,#2d7eaa 192px,#3083af 256px,#3386b3 320px,#3489b6 384px,#368bb8 448px,#368bb9 512px,#368bb8 576px,#358ab7 640px,#3388b4 704px,#3184b0 768px,#2d7fab 832px,#2979a4 896px,#23729c 960px,#1d6993 1024px)"></div><div style="top:736px;background:linear-gradient(90deg,#236d97 0px,#27739e 64px,#2a79a4 128px,#2e7eaa 192px,#3082af 256px,#3386b2 320px,#3488b5 384px,#368ab7 448px,#368bb8 512px,#368bb8 576px,#358ab6 640px,#3387b4 704px,#3184b0 768px,#2d7faa 832px,#2979a4 896px,#23719c 960px,#1d6992 1024px)"></div><div style="top:744px;background:linear-gradient(90deg,#236d97 0px,#27739e 64px,#2b79a4 128px,#2e7eaa 192px,#3182ae 256px,#3385b2 320px,#3588b5 384px,#368ab7 448px,#368bb8 512px,#368ab7 576px,#3589b6 640px,#3387b3 704px,#3183af 768px,#2d7eaa 832px,#2978a3 896px,#23719b 960px,#1d6892 1024px)"></div><div style="top:752px;background:linear-gradient(90deg,#236d96 0px,#27739d 64px,#2b79a4 128px,#2e7da9 192px,#3182ae 256px,#3385b2 320px,#3588b4 384px,#3689b6 448px,#368ab7 512px,#368ab7 576px,#3589b5 640px,#3386b2 704px,#3183ae 768px,#2d7ea9 832px,#2978a2 896px,#23709a 960px,#1c6791 1024px)"></div><div style="top:760px;background:linear-gradient(90deg,#246d96 0px,#28739d 64px,#2b78a3 128px,#2e7da9 192px,#3181ad 256px,#3385b1 320px,#3587b4 384px,#3689b6 448px,#368ab7 512px,#3689b6 576px,#3588b5 640px,#3386b2 704px,#3182ae 768px,#2d7da9 832px,#2877a2 896px,#23709a 960px,#1c6790 1024px)"></div></div>
<div id="tab"></div>
<div id="idle">
  <div class="title">
    <svg class="a" style="left:5px;top:2px" width="16" height="16" viewBox="0 0 16 16">
      <path d="M0.5 0.5h8.5l2.5 2.5V14C10 13.2 8.5 13.4 7 14.2S3 15.2 0.5 14.5Z" fill="#f4f4f2" stroke="#b4b4b0" stroke-width="1"/>
      <path d="M2 3h5M2 5h4M2 7h3M2 9h3M2 11h3" stroke="#d8d8d4" stroke-width="1"/>
      <g transform="translate(4.7,2.5) scale(0.95)"><path d="M6,0 C3.5,0 3.2,1 3.2,2 V3.2 H6.2 V3.6 H2 C0.8,3.6 0,4.6 0,6.2 C0,7.8 0.7,8.6 1.8,8.6 H2.6 V7.2 C2.6,6.2 3.4,5.4 4.4,5.4 H7.2 C8.1,5.4 8.8,4.7 8.8,3.8 V2 C8.8,1 8,0 6,0 Z" fill="none" stroke="#fff" stroke-width="1.6" stroke-opacity="0.9"/><path d="M6,12 C8.5,12 8.8,11 8.8,10 V8.8 H5.8 V8.4 H10 C11.2,8.4 12,7.4 12,5.8 C12,4.2 11.3,3.4 10.2,3.4 H9.4 V4.8 C9.4,5.8 8.6,6.6 7.6,6.6 H4.8 C3.9,6.6 3.2,7.3 3.2,8.2 V10 C3.2,11 4,12 6,12 Z" fill="none" stroke="#fff" stroke-width="1.6" stroke-opacity="0.9"/><path d="M6,0 C3.5,0 3.2,1 3.2,2 V3.2 H6.2 V3.6 H2 C0.8,3.6 0,4.6 0,6.2 C0,7.8 0.7,8.6 1.8,8.6 H2.6 V7.2 C2.6,6.2 3.4,5.4 4.4,5.4 H7.2 C8.1,5.4 8.8,4.7 8.8,3.8 V2 C8.8,1 8,0 6,0 Z" fill="#356c9f"/><path d="M6,12 C8.5,12 8.8,11 8.8,10 V8.8 H5.8 V8.4 H10 C11.2,8.4 12,7.4 12,5.8 C12,4.2 11.3,3.4 10.2,3.4 H9.4 V4.8 C9.4,5.8 8.6,6.6 7.6,6.6 H4.8 C3.9,6.6 3.2,7.3 3.2,8.2 V10 C3.2,11 4,12 6,12 Z" fill="#f5c52a"/></g>
      
    </svg>
    <div class="ttext">1.py - /home/shiyanlou/1.py (3.5.3)</div>
  </div>
  <!-- title buttons -->
  <svg class="a" style="left:522px;top:6px" width="64" height="11" viewBox="0 0 64 11" fill="none" stroke="#a8a59f"><path d="M2.5 6.2L6.5 1.7L10.5 6.2Z" stroke-width="1.35" stroke-linejoin="miter"/><rect x="1" y="8" width="11" height="2" fill="#a8a59f" stroke="none"/><rect x="18.8" y="8" width="9.2" height="2" fill="#a8a59f" stroke="none"/><rect x="36.9" y="1.9" width="7.4" height="7.2" stroke-width="1.8"/><path d="M53.6 1.6L61.7 9.4M61.7 1.6L53.6 9.4" stroke-width="1.9"/></svg>
  <div id="menubar">
    <span style="left:7px"><u>F</u>ile</span>
    <span style="left:38px"><u>E</u>dit</span>
    <span style="left:71px">F<u>o</u>rmat</span>
    <span style="left:120px"><u>R</u>un</span>
    <span style="left:152px"><u>O</u>ptions</span>
    <span style="left:204px"><u>W</u>indow</span>
    <span style="left:256px"><u>H</u>elp</span>
  </div>
  <div id="text"><div id="code"><span class="kw">import</span> turtle
t = turtle.Pen()
t.pencolor(<span class="st">"red"</span>)
<span class="kw">for</span> x <span class="kw">in</span> <span class="bi">range</span>(100):
    t.forward(x)
    t.left(91)</div></div>
  <div id="sbar"></div>
</div>

<div id="tw">
  <div class="tleft">
    <svg class="a" style="left:5px;top:4px" width="16" height="12" viewBox="0 0 16 12">
      <defs><linearGradient id="wg" x1="0" y1="0" x2="0" y2="1"><stop offset="0" stop-color="#fff"/><stop offset="1" stop-color="#dcdcd8"/></linearGradient></defs>
      <rect x="0.5" y="0.5" width="15" height="11" rx="1.5" fill="url(#wg)" stroke="#a2a2a0"/>
      <rect x="1.5" y="1" width="13" height="1.6" fill="#4a70ae"/>
      <rect x="1.5" y="2.6" width="13" height="1.2" fill="#b8c8e0" opacity="0.6"/>
    </svg>
  </div>
  <div class="tblue"><div class="ttext">Python Turtle Graphics</div></div>
  <div class="tright">
    <svg class="a" style="left:5px;top:5px" width="64" height="11" viewBox="0 0 64 11" fill="none" stroke="#000"><path d="M2.5 6.2L6.5 1.7L10.5 6.2Z" stroke-width="1.35" stroke-linejoin="miter"/><rect x="1" y="8" width="11" height="2" fill="#000" stroke="none"/><rect x="18.8" y="8" width="9.2" height="2" fill="#000" stroke="none"/><rect x="36.9" y="1.9" width="7.4" height="7.2" stroke-width="1.8"/><path d="M53.6 1.6L61.7 9.4M61.7 1.6L53.6 9.4" stroke-width="1.9"/></svg>
  </div>
  <div id="canvas"></div>
</div>
<svg id="tsvg" width="1024" height="768" style="position:absolute;left:0;top:0" shape-rendering="crispEdges"><polyline points="422.5,392.5 422.5,392.5 422.5,391.5 420.5,391.5 420.5,394.5 424.5,394.5 424.5,389.5 418.5,389.5 419.5,396.5 427.5,395.5 425.5,386.5 415.5,388.5 417.5,399.5 429.5,396.5 426.5,384.5 413.5,387.5 416.5,402.5 432.5,397.5 427.5,381.5 410.5,387.5 416.5,404.5 435.5,398.5 427.5,378.5 407.5,386.5 416.5,407.5 438.5,398.5 427.5,375.5 404.5,386.5 416.5,410.5 441.5,397.5 427.5,372.5 401.5,387.5 417.5,414.5 444.5,397.5 426.5,369.5 398.5,388.5 418.5,417.5 447.5,395.5 425.5,366.5 395.5,389.5 419.5,420.5 450.5,394.5 423.5,363.5 392.5,391.5 421.5,422.5 453.5,392.5 421.5,360.5 389.5,393.5 423.5,425.5 455.5,390.5 418.5,357.5 386.5,396.5 426.5,428.5 458.5,387.5 416.5,355.5 384.5,399.5 429.5,430.5 460.5,384.5 412.5,353.5 382.5,402.5 432.5,432.5 462.5,380.5 409.5,351.5 380.5,406.5 436.5,434.5 464.5,377.5 405.5,349.5 378.5,409.5 440.5,436.5 465.5,373.5 401.5,348.5 377.5,414.5 444.5,437.5 466.5,368.5 397.5,347.5 376.5,418.5 449.5,437.5 467.5,364.5 392.5,346.5 376.5,423.5 453.5,438.5 467.5,359.5 387.5,346.5 376.5,427.5 458.5,438.5 467.5,354.5 382.5,347.5 376.5,432.5 463.5,437.5 466.5,349.5 377.5,347.5 377.5,437.5 468.5,436.5 465.5,344.5 372.5,349.5 379.5,443.5 473.5,434.5 463.5,339.5 367.5,351.5 381.5,448.5 478.5,432.5" fill="none" stroke="#ff0000" stroke-width="1"/><polygon points="478.5,432.5 475.5,442.5 480.5,439.5 485.5,440.5" fill="#000" stroke="#ff0000" stroke-width="1"/></svg>

<div id="tb">
  <svg class="a" style="left:0;top:0" width="30" height="31" viewBox="0 0 30 31">
    <path d="M17.9 7.2L19.1 10.5L13.8 18.6L12.4 15ZM21.6 12L23 15.2L17.7 23.4L16.3 20Z" fill="#137a6e" stroke="#137a6e" stroke-width="1.3" stroke-linejoin="round"/>
  </svg>
  <span class="a" style="left:35px;top:7px;font-size:13px;color:#222">应用程序菜单</span>
  <div class="btn on" style="left:124px;width:200px">
    <svg class="a" style="left:3px;top:8px" width="15" height="12" viewBox="0 0 15 12">
      <rect x="0.5" y="0.5" width="14" height="11" fill="#e4e4e0" stroke="#8a8a88"/>
      <rect x="1" y="1" width="13" height="2" fill="#3d6cb2"/>
    </svg>
    <span style="left:24px;font-size:12.4px">Python Turtle Graphics</span>
  </div>
  <div class="btn" style="left:324px;width:200px">
    <svg class="a" style="left:2px;top:6px" width="16" height="16" viewBox="0 0 16 16">
      <path d="M0.5 0.5h8.5l2.5 2.5V14C10 13.2 8.5 13.4 7 14.2S3 15.2 0.5 14.5Z" fill="#f4f4f2" stroke="#b4b4b0" stroke-width="1"/>
      <g transform="translate(4.7,2.5) scale(0.95)" opacity="0.62"><path d="M6,0 C3.5,0 3.2,1 3.2,2 V3.2 H6.2 V3.6 H2 C0.8,3.6 0,4.6 0,6.2 C0,7.8 0.7,8.6 1.8,8.6 H2.6 V7.2 C2.6,6.2 3.4,5.4 4.4,5.4 H7.2 C8.1,5.4 8.8,4.7 8.8,3.8 V2 C8.8,1 8,0 6,0 Z" fill="none" stroke="#fff" stroke-width="1.6" stroke-opacity="0.9"/><path d="M6,12 C8.5,12 8.8,11 8.8,10 V8.8 H5.8 V8.4 H10 C11.2,8.4 12,7.4 12,5.8 C12,4.2 11.3,3.4 10.2,3.4 H9.4 V4.8 C9.4,5.8 8.6,6.6 7.6,6.6 H4.8 C3.9,6.6 3.2,7.3 3.2,8.2 V10 C3.2,11 4,12 6,12 Z" fill="none" stroke="#fff" stroke-width="1.6" stroke-opacity="0.9"/><path d="M6,0 C3.5,0 3.2,1 3.2,2 V3.2 H6.2 V3.6 H2 C0.8,3.6 0,4.6 0,6.2 C0,7.8 0.7,8.6 1.8,8.6 H2.6 V7.2 C2.6,6.2 3.4,5.4 4.4,5.4 H7.2 C8.1,5.4 8.8,4.7 8.8,3.8 V2 C8.8,1 8,0 6,0 Z" fill="#356c9f"/><path d="M6,12 C8.5,12 8.8,11 8.8,10 V8.8 H5.8 V8.4 H10 C11.2,8.4 12,7.4 12,5.8 C12,4.2 11.3,3.4 10.2,3.4 H9.4 V4.8 C9.4,5.8 8.6,6.6 7.6,6.6 H4.8 C3.9,6.6 3.2,7.3 3.2,8.2 V10 C3.2,11 4,12 6,12 Z" fill="#f5c52a"/></g>
      
    </svg>
    <span style="left:25px">[Python 3.5.3 Shell]</span>
  </div>
  <div class="btn" style="left:524px;width:200px">
    <svg class="a" style="left:2px;top:6px" width="16" height="16" viewBox="0 0 16 16">
      <path d="M0.5 0.5h8.5l2.5 2.5V14C10 13.2 8.5 13.4 7 14.2S3 15.2 0.5 14.5Z" fill="#f4f4f2" stroke="#b4b4b0" stroke-width="1"/>
      <g transform="translate(4.7,2.5) scale(0.95)"><path d="M6,0 C3.5,0 3.2,1 3.2,2 V3.2 H6.2 V3.6 H2 C0.8,3.6 0,4.6 0,6.2 C0,7.8 0.7,8.6 1.8,8.6 H2.6 V7.2 C2.6,6.2 3.4,5.4 4.4,5.4 H7.2 C8.1,5.4 8.8,4.7 8.8,3.8 V2 C8.8,1 8,0 6,0 Z" fill="none" stroke="#fff" stroke-width="1.6" stroke-opacity="0.9"/><path d="M6,12 C8.5,12 8.8,11 8.8,10 V8.8 H5.8 V8.4 H10 C11.2,8.4 12,7.4 12,5.8 C12,4.2 11.3,3.4 10.2,3.4 H9.4 V4.8 C9.4,5.8 8.6,6.6 7.6,6.6 H4.8 C3.9,6.6 3.2,7.3 3.2,8.2 V10 C3.2,11 4,12 6,12 Z" fill="none" stroke="#fff" stroke-width="1.6" stroke-opacity="0.9"/><path d="M6,0 C3.5,0 3.2,1 3.2,2 V3.2 H6.2 V3.6 H2 C0.8,3.6 0,4.6 0,6.2 C0,7.8 0.7,8.6 1.8,8.6 H2.6 V7.2 C2.6,6.2 3.4,5.4 4.4,5.4 H7.2 C8.1,5.4 8.8,4.7 8.8,3.8 V2 C8.8,1 8,0 6,0 Z" fill="#356c9f"/><path d="M6,12 C8.5,12 8.8,11 8.8,10 V8.8 H5.8 V8.4 H10 C11.2,8.4 12,7.4 12,5.8 C12,4.2 11.3,3.4 10.2,3.4 H9.4 V4.8 C9.4,5.8 8.6,6.6 7.6,6.6 H4.8 C3.9,6.6 3.2,7.3 3.2,8.2 V10 C3.2,11 4,12 6,12 Z" fill="#f5c52a"/></g>
      
    </svg>
    <span style="left:24px;white-space:pre;letter-spacing:0.22px">1.py -  /home/shiyanlou/1.···</span>
  </div>
  <span class="a" style="left:954px;top:6px;font-size:14px;color:#111">15:17</span>
  <svg class="a" style="left:996px;top:1px" width="28" height="30" viewBox="0 0 28 30">
    <rect x="1.5" y="0.5" width="25" height="27" fill="none" stroke="#8a857e" stroke-width="1"/>
    <path d="M8 11C9 6 13 5 16 6.5S21 8 21.5 4.5" fill="none" stroke="#6a6a6a" stroke-width="1"/>
    <path d="M4.5 12.5Q4.5 11 6 11H22Q23.5 11 23.5 12.5L24.3 21.5H3.7Z" fill="#f2f2f0" stroke="#3a3a3a" stroke-width="1"/>
    <rect x="3" y="21" width="22" height="2.2" rx="1" fill="#222"/>
    <path d="M6.5 13.5H21M6 15.5H21.5M6 17.5H22" stroke="#a0a0a0" stroke-width="0.9"/>
    <rect x="9" y="19" width="9" height="1.2" fill="#8a8a8a"/>
    <rect x="18.5" y="12" width="3" height="1.2" fill="#d8d060"/>
  </svg>
</div>
<!-- watermark -->
<svg class="a" style="left:830px;top:715px" width="60" height="45" viewBox="0 0 60 45"><defs><pattern id="stp" width="4" height="2" patternUnits="userSpaceOnUse" y="0"><rect width="4" height="2" fill="#fff" opacity="0.5"/><rect width="4" height="1" fill="#fff"/></pattern><mask id="wm"><rect width="60" height="22" fill="#fff"/><rect y="25" width="60" height="20" fill="url(#stp)"/></mask></defs><g mask="url(#wm)"><g opacity="0.55" fill="rgb(60,125,240)" fill-rule="evenodd"><path d="M7.90 22.40a14.65 14.65 0 1 0 29.30 0a14.65 14.65 0 1 0 -29.30 0ZM15.00 22.40a9.65 9.65 0 1 0 19.30 0a9.65 9.65 0 1 0 -19.30 0Z"/><path d="M20.80 22.40a14.65 14.65 0 1 0 29.30 0a14.65 14.65 0 1 0 -29.30 0ZM27.80 22.40a9.90 9.90 0 1 0 19.80 0a9.90 9.90 0 1 0 -19.80 0Z"/></g></g></svg>
<span class="a" style="left:885px;top:724px;font-size:24px;line-height:30px;color:rgba(70,130,240,0.45);font-weight:bold;transform:scaleX(1.33);transform-origin:0 0;-webkit-text-stroke:1px rgba(70,130,240,0.45)">蓝桥云课</span>
</body></html>
